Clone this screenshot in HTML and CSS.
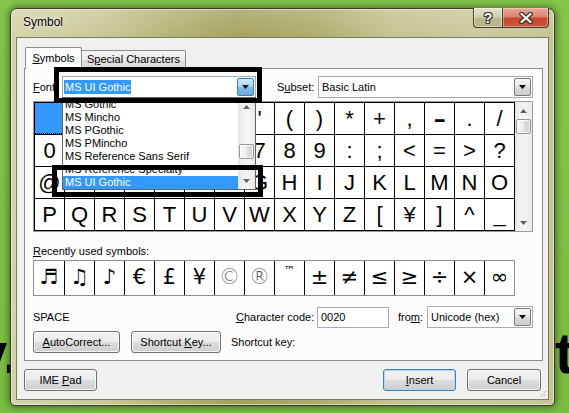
FILE: index.html
```html
<!DOCTYPE html>
<html>
<head>
<meta charset="utf-8">
<title>Symbol</title>
<link rel="stylesheet" href="styles.css">
</head>
<body>
<div class="desktop">
  <span class="bg-text bg-left">v.</span>
  <span class="bg-text bg-right">t</span>

  <div class="window">
    <div class="titlebar">
      <span class="title">Symbol</span>
      <div class="caption">
        <div class="cap-btn cap-help">?</div>
        <div class="cap-btn cap-close">
          <svg width="14" height="12" viewBox="0 0 14 12"><path d="M2.5 2 L11.5 10 M11.5 2 L2.5 10" stroke="#33302a" stroke-width="4.6" stroke-linecap="round"/><path d="M2.5 2 L11.5 10 M11.5 2 L2.5 10" stroke="#ffffff" stroke-width="2.3" stroke-linecap="round"/></svg>
        </div>
      </div>
    </div>

    <div class="client">
      <div class="tabs">
        <div class="tab tab-active"><u>S</u>ymbols</div>
        <div class="tab">S<u>p</u>ecial Characters</div>
      </div>

      <div class="panel">
        <div class="font-row">
          <span class="lbl lbl-font"><u>F</u>ont:</span>
          <div class="combo font-combo">
            <div class="combo-field"><span class="sel-text">MS UI Gothic</span></div>
            <div class="drop-btn drop-hot"><svg width="7" height="4" viewBox="0 0 7 4"><polygon points="0,0 7,0 3.5,4" fill="#1a1a1a"/></svg></div>
            <div class="font-list">
              <div class="list-items">
                <div class="list-item">MS Gothic</div>
                <div class="list-item">MS Mincho</div>
                <div class="list-item">MS PGothic</div>
                <div class="list-item">MS PMincho</div>
                <div class="list-item">MS Reference Sans Serif</div>
                <div class="list-item">MS Reference Specialty</div>
                <div class="list-item list-item-sel">MS UI Gothic</div>
              </div>
              <div class="vscroll">
                <div class="sb-arrow"><svg width="7" height="4" viewBox="0 0 7 4"><polygon points="0,4 7,4 3.5,0" fill="#606060"/></svg></div>
                <div class="sb-track"><div class="sb-thumb list-thumb"></div></div>
                <div class="sb-arrow"><svg width="7" height="4" viewBox="0 0 7 4"><polygon points="0,0 7,0 3.5,4" fill="#606060"/></svg></div>
              </div>
            </div>
          </div>
          <span class="lbl lbl-subset">S<u>u</u>bset:</span>
          <div class="combo subset-combo">
            <div class="combo-field">Basic Latin</div>
            <div class="drop-btn"><svg width="7" height="4" viewBox="0 0 7 4"><polygon points="0,0 7,0 3.5,4" fill="#000"/></svg></div>
          </div>
        </div>

        <div class="grid-wrap">
          <div class="char-grid">
            <div class="cell cell-sel"></div><div class="cell">!</div><div class="cell">"</div><div class="cell">#</div><div class="cell">$</div><div class="cell">%</div><div class="cell">&amp;</div><div class="cell">'</div><div class="cell">(</div><div class="cell">)</div><div class="cell">*</div><div class="cell">+</div><div class="cell">,</div><div class="cell"><span class="hyphen">-</span></div><div class="cell">.</div><div class="cell">/</div>
            <div class="cell">0</div><div class="cell">1</div><div class="cell">2</div><div class="cell">3</div><div class="cell">4</div><div class="cell">5</div><div class="cell">6</div><div class="cell">7</div><div class="cell">8</div><div class="cell">9</div><div class="cell">:</div><div class="cell">;</div><div class="cell">&lt;</div><div class="cell">=</div><div class="cell">&gt;</div><div class="cell">?</div>
            <div class="cell">@</div><div class="cell">A</div><div class="cell">B</div><div class="cell">C</div><div class="cell">D</div><div class="cell">E</div><div class="cell">F</div><div class="cell">G</div><div class="cell">H</div><div class="cell">I</div><div class="cell">J</div><div class="cell">K</div><div class="cell">L</div><div class="cell">M</div><div class="cell">N</div><div class="cell">O</div>
            <div class="cell">P</div><div class="cell">Q</div><div class="cell">R</div><div class="cell">S</div><div class="cell">T</div><div class="cell">U</div><div class="cell">V</div><div class="cell">W</div><div class="cell">X</div><div class="cell">Y</div><div class="cell">Z</div><div class="cell">[</div><div class="cell">¥</div><div class="cell">]</div><div class="cell">^</div><div class="cell">_</div>
          </div>
          <div class="vscroll">
            <div class="sb-arrow"><svg width="7" height="4" viewBox="0 0 7 4"><polygon points="0,4 7,4 3.5,0" fill="#606060"/></svg></div>
            <div class="sb-track"><div class="sb-thumb"></div></div>
            <div class="sb-arrow"><svg width="7" height="4" viewBox="0 0 7 4"><polygon points="0,0 7,0 3.5,4" fill="#606060"/></svg></div>
          </div>
        </div>

        <div class="recent-label"><u>R</u>ecently used symbols:</div>
        <div class="recent-grid">
          <div class="rcell">♬</div><div class="rcell">♫</div><div class="rcell">♪</div><div class="rcell">€</div><div class="rcell">£</div><div class="rcell">¥</div><div class="rcell rlight">©</div><div class="rcell rlight">®</div><div class="rcell rtm">™</div><div class="rcell">±</div><div class="rcell">≠</div><div class="rcell">≤</div><div class="rcell">≥</div><div class="rcell">÷</div><div class="rcell">×</div><div class="rcell">∞</div>
        </div>

        <div class="info-row">
          <span class="char-name">SPACE</span>
          <span class="lbl lbl-code"><u>C</u>haracter code:</span>
          <div class="textbox">0020</div>
          <span class="lbl lbl-from">fro<u>m</u>:</span>
          <div class="combo from-combo">
            <div class="combo-field">Unicode (hex)</div>
            <div class="drop-btn"><svg width="7" height="4" viewBox="0 0 7 4"><polygon points="0,0 7,0 3.5,4" fill="#000"/></svg></div>
          </div>
        </div>

        <div class="action-row">
          <div class="btn btn-auto"><u>A</u>utoCorrect...</div>
          <div class="btn btn-short">Shortcut <u>K</u>ey...</div>
          <span class="lbl lbl-short">Shortcut key:</span>
        </div>
      </div>

      <div class="dialog-buttons">
        <div class="btn btn-ime">IME <u>P</u>ad</div>
        <div class="spacer"></div>
        <div class="btn btn-default btn-insert"><u>I</u>nsert</div>
        <div class="btn btn-cancel">Cancel</div>
      </div>

      <svg class="grip" width="9" height="9" viewBox="0 0 9 9"><path d="M8 2 L2 8 M8 5 L5 8" stroke="#8c8c8c" stroke-width="1" stroke-dasharray="1 1"/></svg>
    </div>
  </div>

  <div class="mark mark-combo"></div>
  <div class="mark mark-item"></div>
</div>
</body>
</html>
```

FILE: styles.css
```css
* { box-sizing: border-box; }
html, body { margin: 0; padding: 0; }
body {
  width: 569px;
  height: 413px;
  overflow: hidden;
  font-family: "Liberation Sans", Arial, sans-serif;
  font-size: 11px;
  color: #000;
  background: #80c248;
}
u { text-decoration: underline; text-underline-offset: 1px; }

.desktop {
  position: relative;
  width: 569px;
  height: 413px;
  overflow: hidden;
  background: linear-gradient(180deg, #82c54a 0%, #7ec046 55%, #79bb43 100%);
}

.bg-text {
  position: absolute;
  font: bold 58px/58px "Liberation Sans", Arial, sans-serif;
  color: #000;
}
.bg-left { left: -25px; top: 324px; }
.bg-right { left: 555px; top: 324px; }

/* window frame */
.window {
  position: absolute;
  left: 10px;
  top: 8px;
  width: 545px;
  height: 398px;
  border: 1px solid #3b3a27;
  border-radius: 7px 7px 5px 5px;
  padding: 0 5px 5px 5px;
  display: flex;
  flex-direction: column;
  background:
    linear-gradient(180deg, rgba(255,255,255,0.18) 0%, rgba(255,255,255,0) 30px),
    linear-gradient(90deg, #d5d3a9 0%, #cac898 16%, #b3b073 30%, #a5a25f 42%, #aeab6b 56%, #c4c290 70%, #cac89b 85%, #c6c494 100%);
  box-shadow: 0 0 7px 1px rgba(0, 0, 0, 0.45), inset 0 0 0 1px rgba(255, 255, 255, 0.5);
}

.titlebar {
  height: 28px;
  display: flex;
  justify-content: space-between;
  align-items: flex-start;
}
.title {
  padding-left: 7px;
  line-height: 27px;
  font-size: 12px;
  color: #000;
  text-shadow: 0 0 6px rgba(255, 255, 255, 0.9), 0 0 2px rgba(255, 255, 255, 0.8);
}
.caption {
  display: flex;
  margin-top: -1px;
  height: 20px;
}
.cap-btn {
  height: 20px;
  border: 1px solid #3f3d2e;
  border-top: none;
  display: flex;
  align-items: center;
  justify-content: center;
}
.cap-help {
  width: 29px;
  border-radius: 0 0 0 4px;
  border-right: none;
  background: linear-gradient(180deg, #e4e3cc 0%, #d2d0b1 45%, #bcb98e 55%, #b6b487 100%);
  box-shadow: inset 0 0 0 1px rgba(255, 255, 255, 0.45);
  font: bold 14px/1 "Liberation Sans", Arial, sans-serif;
  color: #fff;
  text-shadow: 1px 0 0 #3d3d35, -1px 0 0 #3d3d35, 0 1px 0 #3d3d35, 0 -1px 0 #3d3d35, 1px 1px 0 #3d3d35, -1px -1px 0 #3d3d35, 1px -1px 0 #3d3d35, -1px 1px 0 #3d3d35;
}
.cap-close {
  width: 47px;
  border-radius: 0 0 4px 0;
  background: linear-gradient(180deg, #e8ab9c 0%, #dc8470 45%, #c9452c 55%, #c85a3f 100%);
  box-shadow: inset 0 0 0 1px rgba(255, 220, 210, 0.45);
}

/* client area */
.client {
  position: relative;
  flex: 1;
  background: #f0f0f0;
  border: 1px solid #7e7c58;
  padding: 9px 5px 8px 7px;
  display: flex;
  flex-direction: column;
}

.tabs {
  display: flex;
  align-items: flex-end;
  height: 22px;
  margin-left: 1px;
  margin-bottom: -1px;
  position: relative;
  z-index: 1;
}
.tab {
  height: 19px;
  width: 104px;
  border: 1px solid #898c95;
  border-left: none;
  border-bottom: none;
  border-radius: 0 2px 0 0;
  background: linear-gradient(180deg, #f3f3f3 0%, #ebebeb 50%, #e0e0e0 51%, #d9d9d9 100%);
  text-align: center;
  line-height: 17px;
}
.tab-active {
  width: 57px;
  height: 22px;
  border-left: 1px solid #898c95;
  border-radius: 2px 2px 0 0;
  background: #fcfcfc;
  line-height: 20px;
}

.panel {
  flex: 1;
  background: #fcfcfc;
  border: 1px solid #898c95;
  padding: 7px 9px 0 8px;
  display: flex;
  flex-direction: column;
}

.lbl { white-space: nowrap; }

/* font / subset row */
.font-row {
  display: flex;
  align-items: center;
  height: 22px;
  position: relative;
  z-index: 3;
}
.lbl-font { width: 29px; }
.lbl-subset { width: 41px; margin-left: 21px; }

.combo {
  height: 22px;
  border: 1px solid #a5acb5;
  background: #fff;
  display: flex;
  align-items: stretch;
}
.combo-field {
  flex: 1;
  padding-left: 3px;
  line-height: 20px;
  white-space: nowrap;
  overflow: hidden;
}
.drop-btn {
  width: 17px;
  margin: 1px;
  border: 1px solid #7a7a7a;
  border-radius: 2px;
  background: linear-gradient(180deg, #f4f4f4 0%, #e9e9e9 50%, #dadada 51%, #cdcdcd 100%);
  display: flex;
  align-items: center;
  justify-content: center;
}
.drop-hot {
  border-color: #3c7fb1;
  background: linear-gradient(180deg, #cfe9fa 0%, #a9d5f3 50%, #7fbbe6 51%, #68acdc 100%);
}

.font-combo {
  width: 194px;
  position: relative;
}
.font-combo .combo-field { padding-left: 1px; }
.sel-text {
  background: #3399ff;
  color: #fff;
  padding: 1px 1px;
}
.subset-combo { flex: 1; }

/* dropdown list overlay */
.font-list {
  position: absolute;
  left: -1px;
  top: 20px;
  width: 194px;
  height: 93px;
  border: 1px solid #646464;
  background: #fff;
  display: flex;
  z-index: 5;
}
.list-items { flex: 1; overflow: hidden; }
.list-item {
  height: 13px;
  line-height: 13px;
  padding-left: 2px;
  white-space: nowrap;
}
.list-item-sel { background: #3399ff; color: #fff; }

/* scrollbars */
.vscroll {
  width: 17px;
  display: flex;
  flex-direction: column;
  background: linear-gradient(90deg, #e4e4e4 0%, #f1f1f1 25%, #f4f4f4 60%, #e9e9e9 100%);
}
.sb-arrow {
  height: 17px;
  display: flex;
  align-items: center;
  justify-content: center;
}
.sb-track { flex: 1; }
.sb-thumb {
  height: 15px;
  margin: 0 1px;
  border: 1px solid #979797;
  border-radius: 2px;
  background: linear-gradient(90deg, #f7f7f7 0%, #ececec 50%, #dedede 51%, #d2d2d2 100%);
  box-shadow: inset 0 0 0 1px rgba(255, 255, 255, 0.7);
}
.list-thumb { margin-top: 29px; }

/* character grid */
.grid-wrap {
  margin-top: 3px;
  width: 500px;
  height: 131px;
  border: 1px solid #9c9c9c;
  display: flex;
}
.char-grid {
  width: 481px;
  display: grid;
  grid-template-columns: repeat(16, 30px);
  grid-auto-rows: 32px;
  border-right: 1px solid #000;
  border-bottom: 1px solid #000;
  background: #fff;
}
.cell {
  border-top: 1px solid #000;
  border-left: 1px solid #000;
  font: 22px/31px "Liberation Sans", Arial, sans-serif;
  text-align: center;
  color: #000;
}
.cell-sel {
  background: #3399ff;
  outline: 1px dotted #000;
  outline-offset: -1px;
}
.hyphen {
  display: inline-block;
  font-weight: bold;
  transform: scaleX(1.7);
}

.recent-label {
  margin-top: 12px;
  line-height: 14px;
  height: 14px;
  margin-bottom: 2px;
}
.recent-grid {
  width: 482px;
  height: 36px;
  border: 1px solid #8e8e8e;
  background: #fff;
  display: grid;
  grid-template-columns: repeat(16, 30px);
}
.rcell {
  border-left: 1px solid #000;
  font: 21px/33px "DejaVu Sans", sans-serif;
  text-align: center;
  color: #000;
}
.rcell:first-child { border-left: none; }
.rlight { color: #555; font-weight: 300; }
.rtm { font-size: 11px; line-height: 20px; }

/* info row */
.info-row {
  margin-top: 10px;
  height: 22px;
  display: flex;
  align-items: center;
}
.char-name { width: 203px; }
.lbl-code { width: 81px; }
.textbox {
  width: 72px;
  height: 21px;
  border: 1px solid #a5acb5;
  background: #fff;
  padding-left: 3px;
  line-height: 19px;
}
.lbl-from { margin-left: 9px; width: 29px; }
.from-combo { flex: 1; }

.action-row {
  margin-top: 3px;
  height: 22px;
  display: flex;
  align-items: center;
}

/* buttons */
.btn {
  height: 22px;
  border: 1px solid #707070;
  border-radius: 3px;
  background: linear-gradient(180deg, #f2f2f2 0%, #ebebeb 50%, #dddddd 51%, #cfcfcf 100%);
  box-shadow: inset 0 0 0 1px rgba(255, 255, 255, 0.75);
  text-align: center;
  line-height: 20px;
  white-space: nowrap;
}
.btn-auto { width: 87px; }
.btn-short { width: 90px; margin-left: 11px; }
.lbl-short { margin-left: 10px; }

.dialog-buttons {
  margin-top: 8px;
  height: 22px;
  display: flex;
  padding-right: 2px;
}
.spacer { flex: 1; }
.btn-ime { width: 73px; }
.btn-insert { width: 73px; }
.btn-cancel { width: 74px; margin-left: 11px; }
.btn-default {
  border-color: #3c7fb1;
  box-shadow: inset 0 0 0 1px #a6dcf6;
}

.grip {
  position: absolute;
  right: 1px;
  bottom: 1px;
}

/* annotation marks drawn over the screenshot */
.mark {
  position: absolute;
  border: 5px solid #000;
  z-index: 10;
}
.mark-combo { left: 54px; top: 67px; width: 208px; height: 36px; }
.mark-item { left: 52px; top: 165px; width: 211px; height: 32px; }
```
